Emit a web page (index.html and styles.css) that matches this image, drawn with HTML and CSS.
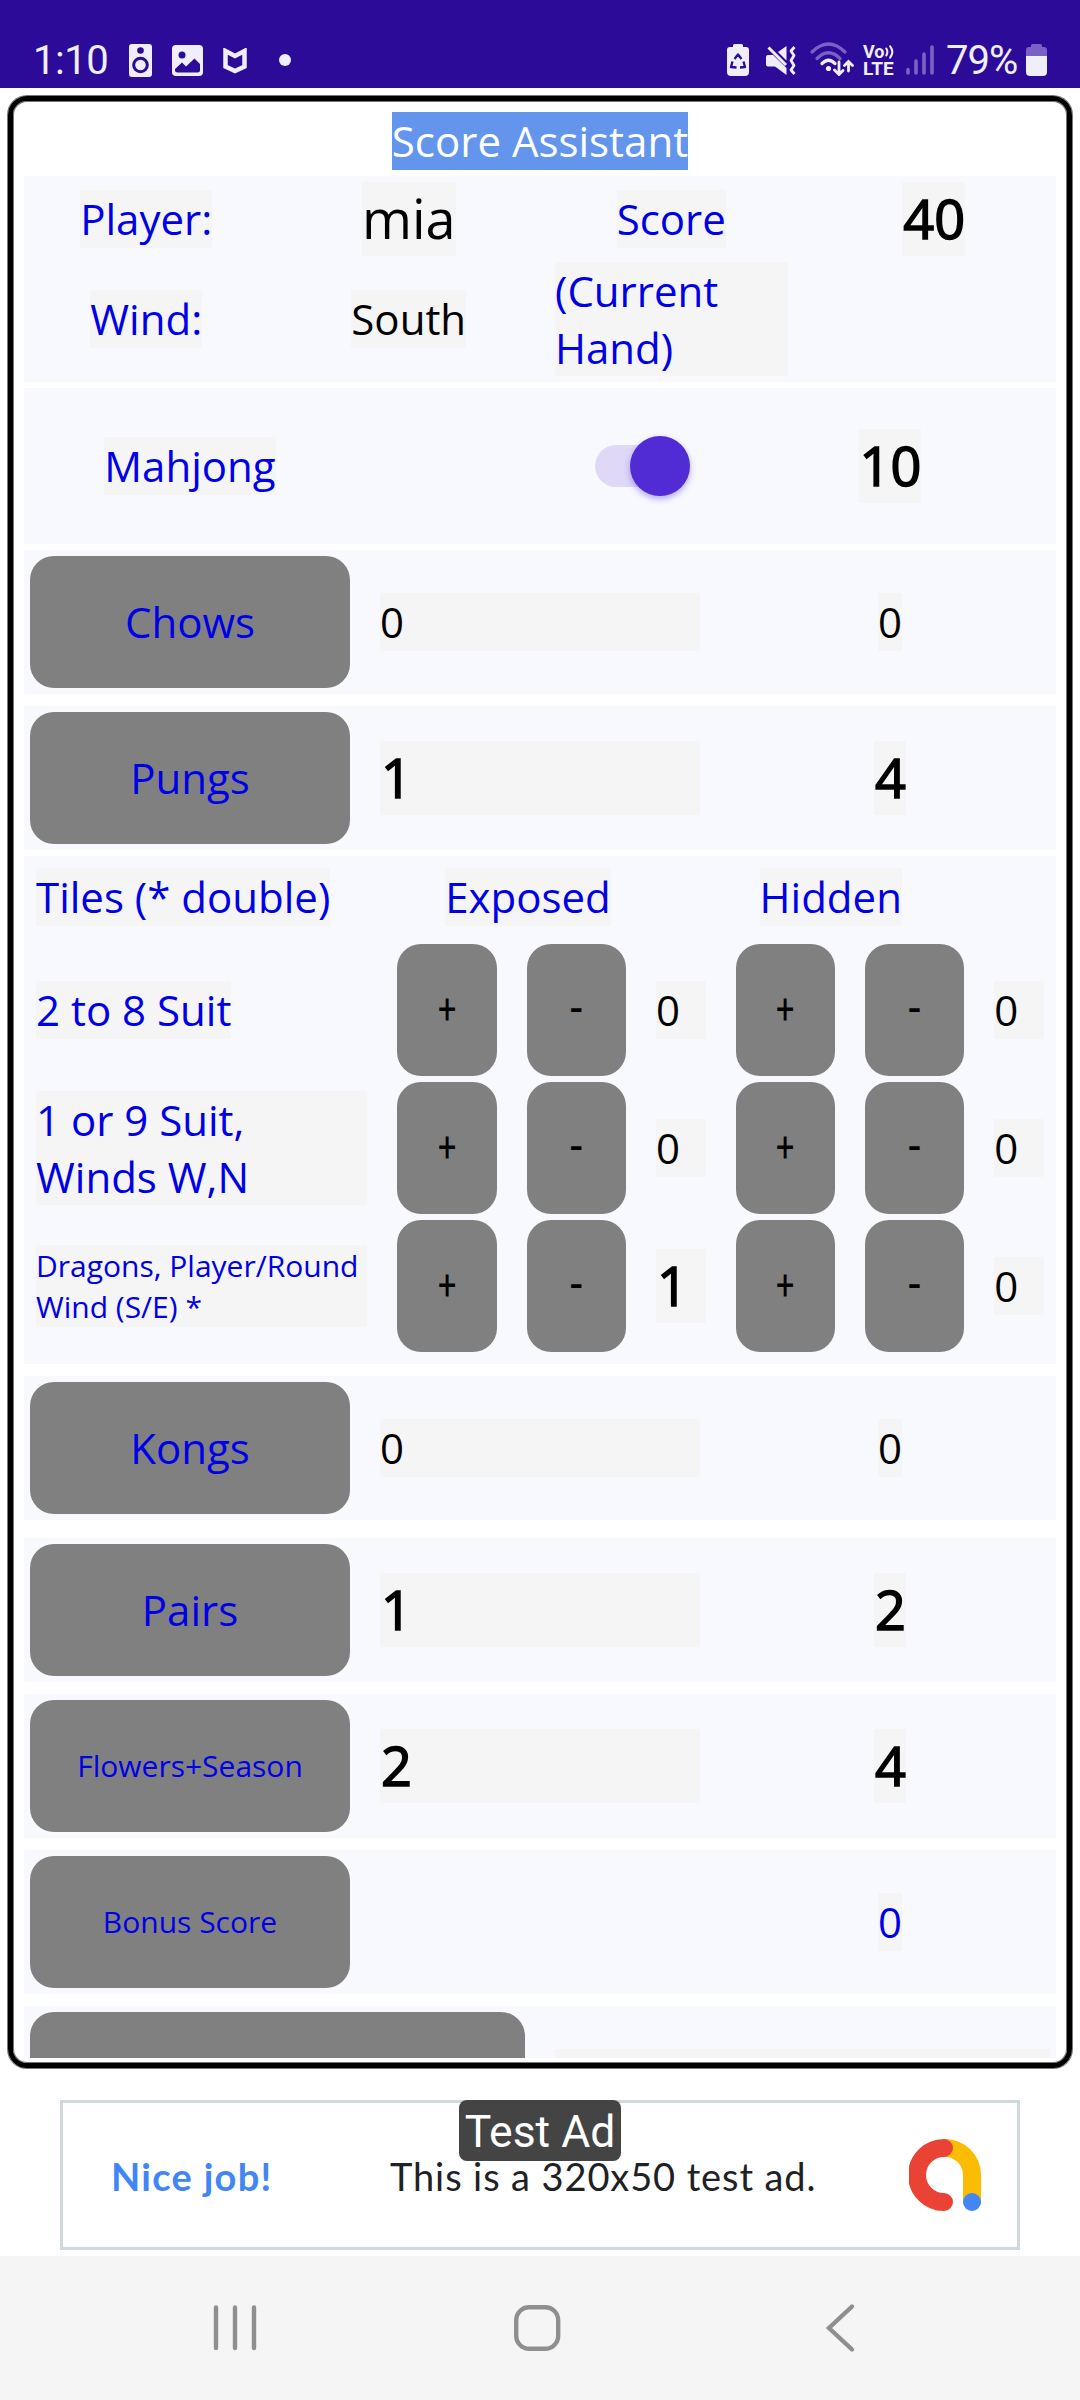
FILE: index.html
```
<!DOCTYPE html>
<html lang="en">
<head>
    <meta charset="UTF-8">
    <meta name="viewport" content="width=device-width, initial-scale=1.0">
    <title>Score Assistant</title>
    <link rel="stylesheet" href="styles.css">
</head>
<body>
    <header class="status-bar">
        <span class="clock">1:10</span>
        <svg class="icon-speaker" width="23" height="33" viewBox="0 0 23 33">
            <rect width="23" height="33" rx="3" fill="#f1eefb"/>
            <circle cx="11.500" cy="6.500" r="3.300" fill="#2b0b98"/>
            <circle cx="11.500" cy="21" r="6.800" fill="none" stroke="#2b0b98" stroke-width="3"/>
        </svg>
        <svg class="icon-image" width="31" height="31" viewBox="0 0 31 31">
            <rect width="31" height="31" rx="4" fill="#f1eefb"/>
            <circle cx="10" cy="10" r="3.500" fill="#2b0b98"/>
            <path d="M3 24 L10 17.500 L14 21.500 L22.500 13.500 L28 19 V25 Q28 27.500 25.500 27.500 H5.500 Q3 27.500 3 25Z" fill="#2b0b98"/>
        </svg>
        <svg class="icon-shield" width="24" height="26" viewBox="0 0 24 26">
            <path d="M2.500 3 L12 8 L21.500 3 V18.500 L12 23 L2.500 18.500Z" fill="none" stroke="#f1eefb" stroke-width="4.500"/>
        </svg>
        <span class="dot"></span>

        <div class="status-right">
            <svg class="icon-recycle" width="22" height="32" viewBox="0 0 22 32">
                <path d="M6 3 V1.500 Q6 0 7.500 0 H14.500 Q16 0 16 1.500 V3 H19 Q22 3 22 6 V28 Q22 32 18 32 H4 Q0 32 0 28 V6 Q0 3 3 3Z" fill="#f1eefb"/>
                <path d="M7.500 15 L11 10.500 L14.500 15 M16.500 17.500 L18 23 L13 23.500 M9.500 23.500 L4 23 L5.500 17.500" fill="none" stroke="#2b0b98" stroke-width="2.300" stroke-linejoin="round"/>
            </svg>
            <svg class="icon-mute" width="30" height="29" viewBox="0 0 30 29">
                <path d="M0 11 Q0 9 2 9 H7 L20.500 22 V29 L9 20.500 H2 Q0 20.500 0 18.500Z M12 6 L20.500 0 V14.500Z" fill="#f1eefb"/>
                <path d="M2.500 1.500 L20 19" stroke="#f1eefb" stroke-width="3"/>
                <path d="M28.500 1 L25 5 L28 9.500 L25 14.500 L28 19.500 L25 24 L28.500 28" fill="none" stroke="#f1eefb" stroke-width="2.800" stroke-linejoin="round"/>
            </svg>
            <svg class="icon-wifi" width="44" height="34" viewBox="0 0 44 34">
                <g fill="none" stroke-width="3.200" stroke-linecap="round">
                    <path d="M2 10 Q18.500 -6 35 10" stroke="#7a62c4"/>
                    <path d="M7 16.500 Q18.500 5 30 16.500" stroke="#7a62c4"/>
                    <path d="M12 21.500 Q18.500 15 25 21.500" stroke="#f1eefb"/>
                    <path d="M29 20 V32 M24.500 28 L29 32.500 L33 28.500 M38.500 29 V20 M34.500 23.500 L38.500 19.500 L42.500 23.500" stroke="#f1eefb" stroke-width="2.800"/>
                </g>
                <circle cx="18.500" cy="26.500" r="2.600" fill="#f1eefb"/>
            </svg>
            <div class="volte">
                <div class="vo">Vo
                    <svg width="11" height="16" viewBox="0 0 11 16"><path d="M1.500 4 Q4 8 1.500 12 M6 1.500 Q11 8 6 14.500" fill="none" stroke="#f1eefb" stroke-width="2.400" stroke-linecap="round"/></svg>
                </div>
                <div class="lte">LTE</div>
            </div>
            <svg class="icon-signal" width="28" height="30" viewBox="0 0 28 30">
                <path d="M2 24.500 V28 M10 16 V28 M18 9 V28 M26 2 V28" stroke="#7a62c4" stroke-width="3.600" stroke-linecap="round"/>
            </svg>
            <span class="percent">79%</span>
            <svg class="icon-battery" width="21" height="32" viewBox="0 0 21 32">
                <path d="M0 12 V6 Q0 3 3 3 H5 V1.500 Q5 0 6.500 0 H14.500 Q16 0 16 1.500 V3 H18 Q21 3 21 6 V12Z" fill="#7a62c4"/>
                <path d="M0 12 H21 V28 Q21 32 17 32 H4 Q0 32 0 28Z" fill="#f1eefb"/>
            </svg>
        </div>
    </header>

    <main class="board">
        <div class="scroll">
            <h1 class="title">Score Assistant</h1>

            <section class="card player">
                <span class="label">Player:</span>
                <span class="value big">mia</span>
                <span class="label">Score</span>
                <span class="value big bold">40</span>
                <span class="label">Wind:</span>
                <span class="value">South</span>
                <span class="label multi">(Current Hand)</span>
            </section>

            <section class="card mahjong">
                <span class="label">Mahjong</span>
                <div class="switch"><div class="thumb"></div></div>
                <span class="value big bold">10</span>
            </section>

            <section class="card row">
                <button type="button">Chows</button>
                <span class="value wide">0</span>
                <span class="value">0</span>
            </section>

            <section class="card row gap-12">
                <button type="button">Pungs</button>
                <span class="value wide big bold">1</span>
                <span class="value big bold">4</span>
            </section>

            <section class="card tiles">
                <div class="tiles-head">
                    <span class="label">Tiles (* double)</span>
                    <span class="label">Exposed</span>
                    <span class="label">Hidden</span>
                </div>
                <div class="tiles-grid">
                    <span class="label">2 to 8 Suit</span>
                    <button type="button"><span class="plus">+</span></button>
                    <button type="button">-</button>
                    <span class="value wide">0</span>
                    <button type="button"><span class="plus">+</span></button>
                    <button type="button">-</button>
                    <span class="value wide">0</span>

                    <span class="label multi wide">1 or 9 Suit, Winds W,N</span>
                    <button type="button"><span class="plus">+</span></button>
                    <button type="button">-</button>
                    <span class="value wide">0</span>
                    <button type="button"><span class="plus">+</span></button>
                    <button type="button">-</button>
                    <span class="value wide">0</span>

                    <span class="label small wide">Dragons, Player/Round Wind (S/E) *</span>
                    <button type="button"><span class="plus">+</span></button>
                    <button type="button">-</button>
                    <span class="value wide big bold">1</span>
                    <button type="button"><span class="plus">+</span></button>
                    <button type="button">-</button>
                    <span class="value wide">0</span>
                </div>
            </section>

            <section class="card row gap-12">
                <button type="button">Kongs</button>
                <span class="value wide">0</span>
                <span class="value">0</span>
            </section>

            <section class="card row gap-18">
                <button type="button">Pairs</button>
                <span class="value wide big bold">1</span>
                <span class="value big bold">2</span>
            </section>

            <section class="card row gap-12">
                <button type="button" class="small">Flowers+Season</button>
                <span class="value wide big bold">2</span>
                <span class="value big bold">4</span>
            </section>

            <section class="card row gap-12">
                <button type="button" class="small">Bonus Score</button>
                <span></span>
                <span class="label">0</span>
            </section>

            <section class="card last gap-12">
                <button type="button"></button>
                <span class="value wide"></span>
            </section>
        </div>
    </main>

    <div class="ad">
        <span class="ad-badge">Test Ad</span>
        <span class="ad-nice">Nice job!</span>
        <span class="ad-text">This is a 320x50 test ad.</span>
        <svg class="ad-logo" width="72" height="72" viewBox="0 0 72 72" fill="none" stroke-width="18" stroke-linecap="round">
            <path d="M36 9 A27 27 0 0 1 63 36 V62" stroke="#fbbc04"/>
            <path d="M35 9 A27 27 0 0 0 35 63" stroke="#ea4335"/>
            <circle cx="63" cy="63" r="9" fill="#4285f4" stroke="none"/>
        </svg>
    </div>

    <nav class="nav-bar">
        <svg width="1080" height="144" viewBox="0 0 1080 144" fill="none" stroke="#8f8f8f" stroke-width="4.400" stroke-linecap="round">
            <path d="M216 51.500 V92 M235 51.500 V92 M254 51.500 V92"/>
            <rect x="516.200" y="51.200" width="42" height="41.600" rx="13"/>
            <path d="M852 50.500 L829 72 L852 93.500"/>
        </svg>
    </nav>
</body>
</html>
```
FILE: styles.css
```
* {
    box-sizing: border-box;
}
body {
    margin: 0;
    width: 1080px;
    height: 2400px;
    display: flex;
    flex-direction: column;
    background: #fff;
    font-family: "Open Sans", sans-serif;
    font-size: 42px;
    line-height: 57px;
    overflow: hidden;
}

/* status bar */
.status-bar {
    height: 88px;
    flex: none;
    display: flex;
    align-items: flex-start;
    padding: 44px 33px 0 33px;
    background: #2b0b98;
    color: #f1eefb;
    font-family: Roboto, sans-serif;
    font-size: 40px;
    line-height: 34px;
}
.clock {
    width: 96px;
    letter-spacing: -0.5px;
}
.icon-image {
    margin: 1px 0 0 20px;
}
.icon-shield {
    margin: 4px 0 0 20px;
}
.dot {
    width: 12px;
    height: 12px;
    margin: 10px 0 0 32px;
    border-radius: 50%;
    background: #f1eefb;
}
.status-right {
    display: flex;
    align-items: flex-start;
    margin-left: auto;
}
.icon-mute {
    margin: 2px 0 0 17px;
}
.icon-wifi {
    margin: -2px 0 0 14px;
}
.volte {
    width: 31px;
    margin: 0 0 0 9px;
    font-size: 18px;
    font-weight: 700;
    line-height: 16px;
}
.vo {
    display: flex;
    white-space: nowrap;
}
.lte {
    font-size: 19px;
    line-height: 18px;
}
.icon-signal {
    margin: 1px 0 0 12px;
}
.percent {
    width: 80px;
    margin-left: 12px;
    letter-spacing: -1px;
}

/* score sheet */
.board {
    height: 1972px;
    flex: none;
    margin: 8px 8px 0;
    padding: 11px 11px 5px;
    border: 5px solid #000;
    border-radius: 19px;
    box-shadow: 0 0 0 1px #777, inset 0 0 0 1px #777;
}
.scroll {
    height: 100%;
    overflow: hidden;
    display: flex;
    flex-direction: column;
}
.title {
    align-self: center;
    flex: none;
    margin: 0;
    height: 58px;
    background: #6495ed;
    color: #fff;
    font-size: 42px;
    font-weight: 400;
}
.card {
    flex: none;
    margin-top: 6px;
    padding: 6px;
    display: grid;
    column-gap: 30px;
    justify-items: center;
    align-items: center;
    background: #f8f9ff;
}
.gap-12 {
    margin-top: 12px;
}
.gap-18 {
    margin-top: 18px;
}
.label, .value {
    min-height: 58px;
    background: #f5f5f5;
    color: #0000e6;
}
.value {
    color: #000;
}
.big {
    height: 74px;
    font-size: 54px;
    line-height: 73px;
}
.bold {
    text-indent: 1px;
    -webkit-text-stroke: 1.6px #000;
}
.label.small {
    font-size: 30px;
    line-height: 41px;
}
.wide {
    justify-self: stretch;
}
button {
    width: 100%;
    height: 132px;
    padding: 0 0 2px;
    border: none;
    border-radius: 24px;
    background: #808080;
    color: #0000e6;
    font-family: inherit;
    font-size: 42px;
}
button.small {
    font-size: 30px;
}
.player {
    height: 206px;
    grid-template-columns: repeat(4, 1fr);
    grid-template-rows: 74px 114px;
    row-gap: 6px;
}
.mahjong, .row {
    height: 144px;
    grid-template-columns: repeat(3, 1fr);
}
.mahjong {
    height: 156px;
}
.switch {
    justify-self: end;
    display: flex;
    justify-content: flex-end;
    align-items: center;
    width: 90px;
    height: 42px;
    margin-right: 15px;
    border-radius: 21px;
    background: #dfd8f7;
}
.thumb {
    flex: none;
    width: 60px;
    height: 60px;
    margin-right: -5px;
    border-radius: 50%;
    background: #512bd4;
    box-shadow: 0 3px 6px rgba(81, 43, 212, 0.4);
}
.tiles {
    display: block;
    height: 508px;
    padding: 12px;
}
.tiles-head, .tiles-grid {
    display: grid;
    width: 100%;
    column-gap: 30px;
    align-items: center;
    justify-items: start;
}
.tiles-head {
    grid-template-columns: 4fr 3fr 3fr;
    margin-bottom: 18px;
}
.tiles-grid {
    grid-template-columns: 20fr 6fr 6fr 3fr 6fr 6fr 3fr;
    row-gap: 6px;
}
.tiles-grid button {
    color: #000;
    font-family: Roboto, sans-serif;
    font-size: 40px;
    font-weight: 500;
}
.plus {
    display: inline-block;
    font-size: 43px;
    font-weight: 400;
    transform: scaleX(0.75);
}
.last {
    height: 144px;
    grid-template-columns: 1fr 1fr;
}

/* ad banner */
.ad {
    position: relative;
    flex: none;
    display: flex;
    align-items: center;
    width: 960px;
    height: 150px;
    margin: 32px auto 6px;
    padding: 0 36px 0 48px;
    border: 3px solid #cfd8dc;
    font-family: Lato, sans-serif;
    font-size: 38px;
    line-height: 26px;
    color: #202124;
}
.ad-badge {
    position: absolute;
    left: 396px;
    top: -3px;
    width: 162px;
    height: 61px;
    border-radius: 8px;
    background: #444;
    color: #fff;
    font-family: Roboto, sans-serif;
    font-size: 44.5px;
    line-height: 65px;
    text-align: center;
    white-space: nowrap;
}
.ad-nice {
    width: 279px;
    padding-top: 2px;
    color: #4285f4;
    font-weight: 700;
    letter-spacing: 1.3px;
}
.ad-text {
    padding-top: 2px;
    letter-spacing: 0.9px;
    white-space: nowrap;
}
.ad-logo {
    margin-left: auto;
}
.nav-bar {
    flex: none;
    height: 144px;
    background: #f5f5f5;
}
```
